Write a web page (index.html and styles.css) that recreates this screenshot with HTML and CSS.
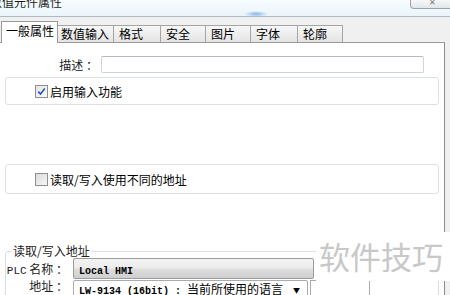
FILE: index.html
```html
<!DOCTYPE html>
<html lang="zh-CN">
<head>
    <meta charset="UTF-8">
    <title>数值元件属性</title>
    <link rel="stylesheet" href="styles.css">
</head>
<body>
    <div class="window">
        <!-- Заголовок окна -->
        <div class="titlebar">
            <span class="title">数值元件属性</span>
            <span class="close-btn">✕</span>
        </div>

        <!-- Вкладки -->
        <div class="tabs">
            <div class="tab active">一般属性</div>
            <div class="tab tab-wide">数值输入</div>
            <div class="tab tab-47">格式</div>
            <div class="tab">安全</div>
            <div class="tab">图片</div>
            <div class="tab tab-47">字体</div>
            <div class="tab tab-45">轮廓</div>
        </div>

        <div class="panel">
            <div class="desc-row">
                <span class="desc-label">描述 ：</span>
                <span class="text-input"></span>
            </div>

            <div class="group">
                <span class="checkbox checked">
                    <svg width="9" height="9" viewBox="0 0 9 9"><path d="M1.2 4.6 L3.5 7 L7.8 1.6" fill="none" stroke="#2a52be" stroke-width="1.6"/></svg>
                </span>
                <span>启用输入功能</span>
            </div>

            <div class="group group-second">
                <span class="checkbox"></span>
                <span>读取/写入使用不同的地址</span>
            </div>

            <fieldset class="address">
                <legend>读取/写入地址</legend>
                <div class="field-row">
                    <span class="field-label"><span class="latin">PLC</span> 名称 ：</span>
                    <div class="select"><span class="latin bold">Local HMI</span></div>
                </div>
                <div class="field-row row-address">
                    <span class="field-label">地址 ：</span>
                    <div class="combo">
                        <span class="combo-text"><span class="latin bold">LW-9134 (16bit) :&nbsp;</span>当前所使用的语言</span>
                        <span class="arrow">▼</span>
                    </div>
                    <div class="combo-extra"></div>
                </div>
            </fieldset>
        </div>

        <!-- Водяной знак поверх окна -->
        <div class="watermark">软件技巧</div>
    </div>
</body>
</html>
```

FILE: styles.css
```css
body {
    margin: 0; /* Убираем отступы по умолчанию */
    background-color: #f0f0f0;
    font-family: "Noto Sans CJK SC", sans-serif;
    font-size: 12px;
    color: #000;
}

.window {
    position: relative;
    width: 450px;
    height: 295px;
    overflow: hidden;
}

.titlebar {
    display: flex;
    justify-content: space-between;
    align-items: flex-start;
    height: 16px;
    overflow: hidden;
    border-bottom: 1px solid #aeb9c1;
    background: radial-gradient(ellipse 12px 3px at 256px 14px, rgba(90, 150, 220, 0.7), rgba(90, 150, 220, 0) 100%),
                linear-gradient(#f7fcfe, #ebf5fa);
}

.title {
    margin-left: -10px;
    margin-top: -6px;
    line-height: 16px;
    color: #1c1c1c;
}

.close-btn {
    width: 42px;
    height: 8px;
    margin-right: -4px;
    border: 1px solid #9aa3aa;
    border-top: none;
    border-radius: 0 0 4px 4px;
    background: linear-gradient(#f8f8f8, #e2e6e9);
    font-size: 8px;
    line-height: 4px;
    text-align: center;
    color: #777;
    overflow: hidden;
}

/* Вкладки */
.tabs {
    display: flex;
    align-items: flex-end;
    height: 25px;
}

.tab {
    box-sizing: border-box;
    width: 46px;
    height: 17px;
    margin-left: -1px;
    padding-left: 5px;
    border: 1px solid #a5a5a5;
    border-bottom: none;
    background: linear-gradient(#f7f7f7, #e4e4e4);
    line-height: 15px;
    white-space: nowrap;
}

.tab.active {
    position: relative;
    z-index: 1;
    width: 57px;
    height: 22px;
    margin-left: 1px;
    margin-bottom: -1px;
    padding-left: 4px;
    background: #fff;
    border-color: #9a9a9a;
    line-height: 18px;
}

.tab-wide {
    width: 57px;
    padding-left: 3px;
}

.tab-47 {
    width: 48px;
}

.tab-45 {
    width: 46px;
}

/* Белая панель вкладки */
.panel {
    box-sizing: border-box;
    width: 445px;
    height: 253px;
    background-color: #fff;
    border-top: 1px solid #9a9a9a;
    border-right: 1px solid #8c8c8c;
    padding-top: 13px;
}

.desc-row {
    display: flex;
    align-items: center;
    height: 17px;
}

.desc-label {
    width: 98px;
    text-align: right;
    color: #222;
}

.text-input {
    box-sizing: border-box;
    width: 323px;
    height: 17px;
    margin-left: 3px;
    border: 1px solid #cfd4d8;
    border-top-color: #b5bac0;
    border-radius: 2px;
}

.group {
    box-sizing: border-box;
    display: flex;
    align-items: center;
    width: 434px;
    height: 28px;
    margin: 4px 0 0 5px;
    padding-left: 29px;
    border: 1px solid #dbe1e5;
    border-radius: 3px;
}

.group-second {
    height: 30px;
    margin-top: 59px;
}

.checkbox {
    box-sizing: border-box;
    display: flex;
    align-items: center;
    justify-content: center;
    width: 13px;
    height: 13px;
    margin-right: 2px;
    border: 1px solid #8e8f8f;
    background: linear-gradient(135deg, #dcdcdc, #f6f6f6);
}

.checkbox.checked {
    background: linear-gradient(135deg, #e4e4e4, #fbfbfb);
}

/* Группа адреса */
.address {
    box-sizing: border-box;
    width: 434px;
    height: 80px;
    margin: 50px 0 0 5px;
    padding: 0;
    border: 1px solid #d9dfe3;
    border-radius: 3px;
}

.address legend {
    margin-left: 5px;
    padding: 0 2px;
    line-height: 14px;
    color: #222;
}

.field-row {
    display: flex;
    align-items: center;
    height: 21px;
}

.row-address {
    margin-top: 1px;
    align-items: flex-start;
}

.field-label {
    width: 62px;
    text-align: right;
    white-space: nowrap;
    color: #222;
}

.field-label .latin {
    font-size: 11px;
}

.row-address .field-label {
    margin-top: -1px;
    line-height: 14px;
}

.latin {
    font-family: "Liberation Mono", monospace;
    font-size: 10px;
}

.bold {
    font-weight: bold;
}

.select {
    box-sizing: border-box;
    width: 241px;
    height: 21px;
    margin-left: 5px;
    padding-left: 5px;
    border: 1px solid #9c9c9c;
    border-radius: 2px;
    background: linear-gradient(#f3f3f3, #ececec 45%, #dddddd 55%, #cfcfcf);
    line-height: 19px;
}

.combo {
    box-sizing: border-box;
    display: flex;
    align-items: flex-start;
    width: 235px;
    height: 21px;
    margin-left: 5px;
    padding: 1px 0 0 5px;
    border: 1px solid #a8abb0;
    border-radius: 2px;
    line-height: 14px;
    white-space: nowrap;
}

.arrow {
    margin-left: auto;
    margin-right: 7px;
    font-size: 7px;
    line-height: 16px;
}

.combo-extra {
    box-sizing: border-box;
    width: 60px;
    height: 21px;
    margin-left: 2px;
    border: 1px solid #a8abb0;
}

/* Водяной знак */
.watermark {
    position: absolute;
    left: 316px;
    top: 232px;
    width: 134px;
    height: 49px;
    padding-left: 3px;
    background-color: #fff;
    font-size: 31px;
    line-height: 47px;
    color: #c8c8c8;
}
```
